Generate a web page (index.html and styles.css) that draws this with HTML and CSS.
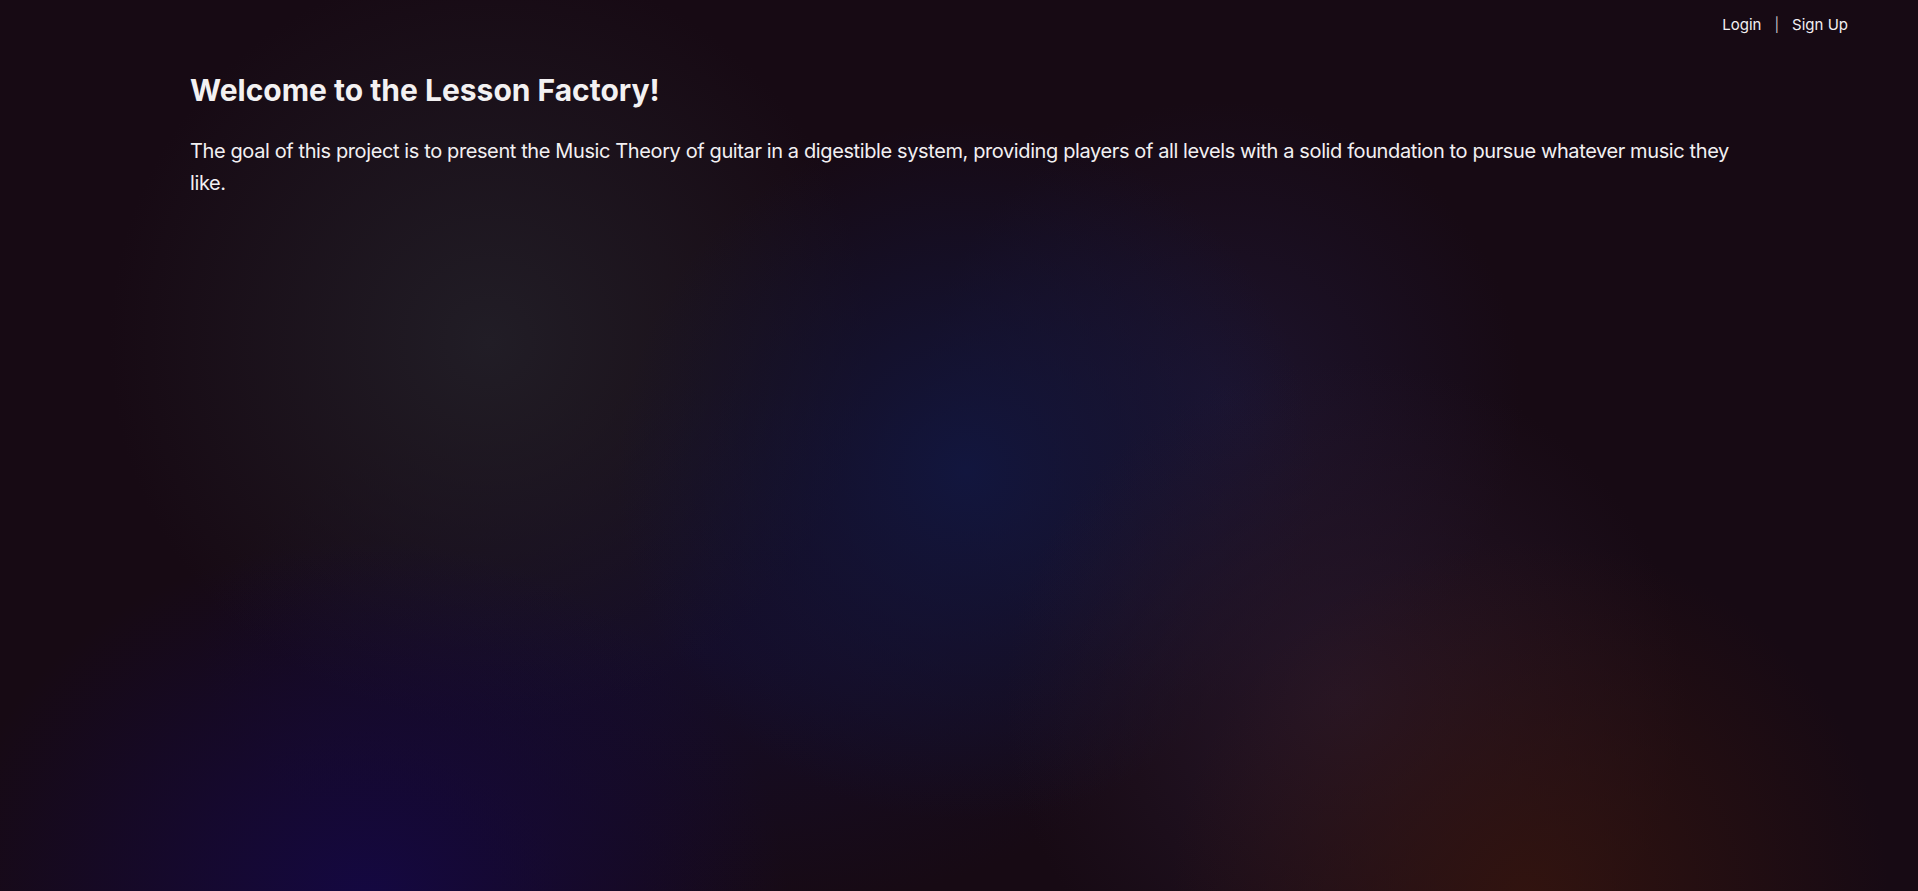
FILE: index.html
```html
<!DOCTYPE html>
<html lang="en">
<head>
<meta charset="utf-8">
<title>Lesson Factory</title>
<link rel="stylesheet" href="styles.css">
</head>
<body>
<div class="page">
  <header class="topbar">
    <nav class="auth">
      <a href="#" class="auth-link">Login</a>
      <span class="sep">|</span>
      <a href="#" class="auth-link">Sign Up</a>
    </nav>
  </header>
  <main class="content">
    <h1 class="title">Welcome to the Lesson Factory!</h1>
    <p class="intro">The goal of this project is to present the Music Theory of guitar in a digestible system, providing players of all levels with a solid foundation to pursue whatever music they like.</p>
  </main>
</div>
</body>
</html>
```
FILE: styles.css
```css
html, body {
  margin: 0;
  padding: 0;
  height: 100%;
}
body {
  font-family: Inter, "Noto Sans", "Liberation Sans", sans-serif;
  color: #f2f0f2;
  background-color: #170a14;
  background-image:
    radial-gradient(circle at 1529px 900px, rgba(52, 20, 14, 0.9) 0, rgba(52, 20, 14, 0) 360px),
    radial-gradient(ellipse 420px 360px at 367px 900px, rgba(20, 8, 68, 0.95) 0, rgba(20, 8, 68, 0) 100%),
    radial-gradient(circle at 1345px 700px, rgba(40, 24, 44, 0.85) 0, rgba(40, 24, 44, 0) 340px),
    radial-gradient(circle at 966px 471px, rgba(18, 22, 62, 1) 0, rgba(18, 22, 62, 0) 350px),
    radial-gradient(circle at 1223px 400px, rgba(30, 22, 52, 0.8) 0, rgba(30, 22, 52, 0) 300px),
    radial-gradient(circle at 489px 342px, rgba(33, 29, 38, 1) 0, rgba(33, 29, 38, 0) 380px),
    radial-gradient(ellipse at 700px 650px, rgba(20, 14, 50, 0.7) 0, rgba(20, 14, 50, 0) 500px);
  background-repeat: no-repeat;
}
.page {
  min-height: 100%;
  display: flex;
  flex-direction: column;
}
.topbar {
  display: flex;
  justify-content: flex-end;
  padding: 15px 70px 0 0;
}
.auth {
  display: flex;
  align-items: center;
  gap: 13px;
  font-size: 15px;
  line-height: 20px;
}
.auth-link {
  color: #f2f0f2;
  text-decoration: none;
}
.sep {
  color: #c8c4c8;
  font-size: 14px;
}
.content {
  margin: 37px 170px 0 190px;
}
.title {
  margin: 0;
  font-size: 30px;
  line-height: 36px;
  font-weight: 700;
  color: #f3f1f2;
}
.intro {
  margin: 27px 0 0;
  font-size: 20px;
  line-height: 32px;
  font-weight: 400;
  letter-spacing: -0.39px;
  color: #f2f0f2;
}
```
